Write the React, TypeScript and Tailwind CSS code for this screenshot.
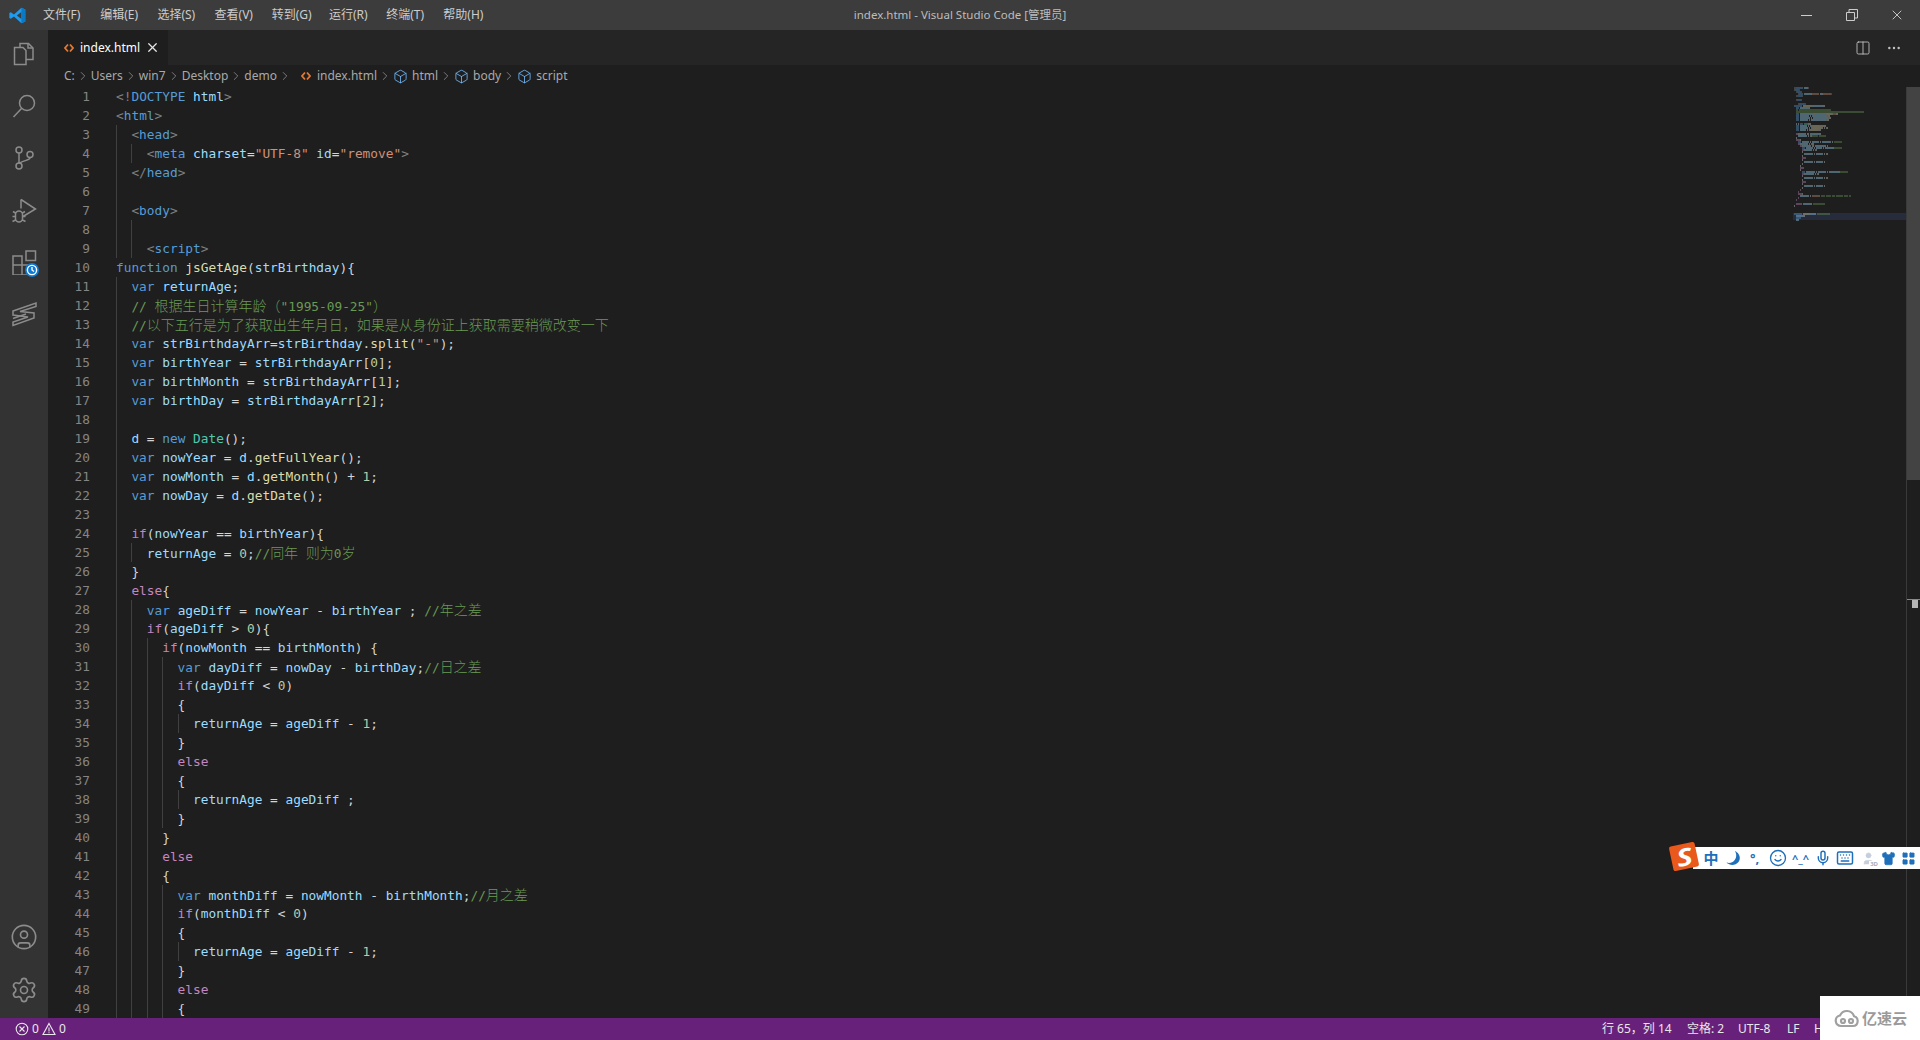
import React from "react";
import { X, Box, ChevronRight, Columns2, Ellipsis, CircleUser, Settings, Smile, Mic, Keyboard, Shirt, LayoutGrid, User } from "lucide-react";

const COLORS: Record<string, string> = {
  g: "text-[#808080]",
  b: "text-[#569cd6]",
  l: "text-[#9cdcfe]",
  s: "text-[#ce9178]",
  y: "text-[#dcdcaa]",
  c: "text-[#6a9955]",
  n: "text-[#b5cea8]",
  p: "text-[#c586c0]",
  t: "text-[#4ec9b0]",
  w: "text-[#d4d4d4]",
};
const FILL: Record<string, string> = {
  g: "#808080", b: "#569cd6", l: "#9cdcfe", s: "#ce9178", y: "#dcdcaa", c: "#6a9955", n: "#b5cea8", p: "#c586c0", t: "#4ec9b0", w: "#d4d4d4",
};

const LINES: string[] = [
  "0|g:<!|b:DOCTYPE |l:html|g:>",
  "0|g:<|b:html|g:>",
  "2|g:<|b:head|g:>",
  '4|g:<|b:meta |l:charset|w:=|s:"UTF-8" |l:id|w:=|s:"remove"|g:>',
  "2|g:</|b:head|g:>",
  "2",
  "2|g:<|b:body|g:>",
  "4",
  "4|g:<|b:script|g:>",
  "0|b:function |y:jsGetAge|w:(|l:strBirthday|w:){",
  "2|b:var |l:returnAge|w:;",
  '2|c:// 根据生日计算年龄（"1995-09-25"）',
  "2|c://以下五行是为了获取出生年月日，如果是从身份证上获取需要稍微改变一下",
  '2|b:var |l:strBirthdayArr|w:=|l:strBirthday|w:.|y:split|w:(|s:"-"|w:);',
  "2|b:var |l:birthYear |w:= |l:strBirthdayArr|w:[|n:0|w:];",
  "2|b:var |l:birthMonth |w:= |l:strBirthdayArr|w:[|n:1|w:];",
  "2|b:var |l:birthDay |w:= |l:strBirthdayArr|w:[|n:2|w:];",
  "2",
  "2|l:d |w:= |b:new |t:Date|w:();",
  "2|b:var |l:nowYear |w:= |l:d|w:.|y:getFullYear|w:();",
  "2|b:var |l:nowMonth |w:= |l:d|w:.|y:getMonth|w:() + |n:1|w:;",
  "2|b:var |l:nowDay |w:= |l:d|w:.|y:getDate|w:();",
  "2",
  "2|p:if|w:(|l:nowYear |w:== |l:birthYear|w:){",
  "4|l:returnAge |w:= |n:0|w:;|c://同年 则为0岁",
  "2|w:}",
  "2|p:else|w:{",
  "4|b:var |l:ageDiff |w:= |l:nowYear |w:- |l:birthYear |w:; |c://年之差",
  "4|p:if|w:(|l:ageDiff |w:> |n:0|w:){",
  "6|p:if|w:(|l:nowMonth |w:== |l:birthMonth|w:) {",
  "8|b:var |l:dayDiff |w:= |l:nowDay |w:- |l:birthDay|w:;|c://日之差",
  "8|p:if|w:(|l:dayDiff |w:< |n:0|w:)",
  "8|w:{",
  "10|l:returnAge |w:= |l:ageDiff |w:- |n:1|w:;",
  "8|w:}",
  "8|p:else",
  "8|w:{",
  "10|l:returnAge |w:= |l:ageDiff |w:;",
  "8|w:}",
  "6|w:}",
  "6|p:else",
  "6|w:{",
  "8|b:var |l:monthDiff |w:= |l:nowMonth |w:- |l:birthMonth|w:;|c://月之差",
  "8|p:if|w:(|l:monthDiff |w:< |n:0|w:)",
  "8|w:{",
  "10|l:returnAge |w:= |l:ageDiff |w:- |n:1|w:;",
  "8|w:}",
  "8|p:else",
  "8|w:{",
];

const MORE: string[] = [
  "10|l:returnAge |w:= |l:ageDiff |w:;",
  "8|w:}",
  "6|p:}",
  "4|p:}",
  "4|p:else|w:{",
  "6|l:returnAge |w:= |s:xxxxxxxx |c:xxxx xxxxx xxx xxxxxxx xxxx xx",
  "4|p:}",
  "2|p:}",
  "2",
  "2|p:return |l:returnAge|c: xxxxxxxxxxxx",
  "0|w:}",
  "0",
  "0",
  "0",
  "0|b:function |y:xxxxxx|w:(|l:xxxxxx |c:xxxxxxxxxxxxx",
  "2|l:xxxxxxxx|w:(",
  "2|b:xxxxx",
  "2|l:xxx",
];

type Tok = [string, string];
function parse(src: string): { indent: number; toks: Tok[] } {
  const parts = src.split("|");
  const indent = Number(parts[0]);
  const toks: Tok[] = parts.slice(1).map((p) => [p[0], p.slice(2)] as Tok);
  return { indent, toks };
}

const CJK = /([\u3000-\u9fff\uff00-\uffef]+)/;
function Comment({ text }: { text: string }) {
  return (
    <>
      {text.split(CJK).map((part, i) =>
        i % 2 === 1 ? (
          <span key={i} className="text-[14px] font-light font-['Noto_Sans_CJK_SC',sans-serif]">{part}</span>
        ) : (
          <span key={i}>{part}</span>
        )
      )}
    </>
  );
}

function CodeLine({ n, src }: { n: number; src: string }) {
  const { indent, toks } = parse(src);
  const guides = Array.from({ length: indent / 2 }, (_, i) => i);
  return (
    <div className="flex h-[19px] leading-[19px]">
      <div className="w-[42px] shrink-0 text-right text-[#858585]">{n}</div>
      <div className="relative ml-[26px] flex-1 whitespace-pre">
        {guides.map((g) => (
          <span key={g} className="absolute top-0 h-[19px] w-px bg-[#404040]" style={{ left: g * 15.4 }} />
        ))}
        <span style={{ paddingLeft: indent * 7.7 }} className="inline-block">
          {toks.map((t, i) => (
            <span key={i} className={COLORS[t[0]]}>
              {t[0] === "c" ? <Comment text={t[1]} /> : t[1]}
            </span>
          ))}
        </span>
      </div>
    </div>
  );
}

function Minimap() {
  const rects: React.ReactNode[] = [];
  [...LINES, ...MORE].forEach((src, row) => {
    const { indent, toks } = parse(src);
    let x = indent + 1;
    toks.forEach((t, ti) => {
      const re = /\S+/g;
      const wide = t[1].replace(/[\u3000-\u9fff\uff00-\uffef]/g, "xx");
      let m: RegExpExecArray | null;
      while ((m = re.exec(wide))) {
        rects.push(<rect key={`${row}-${ti}-${m.index}`} x={x + m.index} y={row * 2 + 0.3} width={m[0].length} height={1.4} fill={FILL[t[0]]} opacity={0.55} />);
      }
      x += wide.length;
    });
  });
  return (
    <div className="w-[113px] shrink-0">
      <svg width="113" height="144" viewBox="0 0 113 144">
        <rect x="0" y="126" width="113" height="7" fill="#262c3c" />
        {rects}
      </svg>
    </div>
  );
}

function HtmlIcon({ size = 10 }: { size?: number }) {
  return (
    <svg width={size} height={size} viewBox="0 0 10 10" fill="none" stroke="#e37933" strokeWidth="1.8">
      <path d="M4 1.5 1 5l3 3.5M6 1.5 9 5 6 8.5" />
    </svg>
  );
}

function ActivityBtn({ children }: { children: React.ReactNode }) {
  return <div className="relative flex h-[48px] w-[48px] items-center justify-center text-[#8c8c8c]">{children}</div>;
}

function ActivityBar() {
  const s = { fill: "none", stroke: "currentColor", strokeWidth: 1.5 };
  return (
    <div className="flex w-[48px] shrink-0 flex-col justify-between bg-[#333333] pb-[4px]">
      <div className="flex flex-col gap-[4px]">
        <ActivityBtn>
          <svg width="26" height="26" viewBox="0 0 26 26" {...s}>
            <path d="M9 6V2.5h8.5l4.5 4.5v11.5h-7" />
            <path d="M17 2.5V7h5" />
            <path d="M3.5 6.5H12l3 3v14H3.5z" />
          </svg>
        </ActivityBtn>
        <ActivityBtn>
          <svg width="26" height="26" viewBox="0 0 26 26" {...s}>
            <circle cx="16" cy="10" r="7.5" />
            <path d="M10.5 15.5 2.5 24" />
          </svg>
        </ActivityBtn>
        <ActivityBtn>
          <svg width="26" height="26" viewBox="0 0 26 26" {...s}>
            <circle cx="8" cy="5" r="3" />
            <circle cx="19" cy="9.5" r="3" />
            <circle cx="8" cy="21" r="3" />
            <path d="M8 8v10M19 12.5c0 3.5-8 2.5-10.5 6" />
          </svg>
        </ActivityBtn>
        <ActivityBtn>
          <svg width="26" height="26" viewBox="0 0 26 26" {...s}>
            <path d="M10 2.5 24.5 12 12 19.5" />
            <path d="M10 2.5v9" />
            <path d="M4.5 17.5a3.5 3.5 0 0 1 7 0v4a3.5 3.5 0 0 1-7 0zM4.5 19.5H1.5M11.5 19.5h3M4.5 23l-3 1.5M11.5 23l3 1.5M4.5 16 2 14.5M11.5 16l2.5-1.5" />
          </svg>
        </ActivityBtn>
        <ActivityBtn>
          <svg width="26" height="26" viewBox="0 0 26 26" {...s}>
            <path d="M2 7h9v19H2zM2 16h9M11 16h9v10h-9" />
            <path d="M15 2h9.5v9.5H15z" />
          </svg>
          <span className="absolute left-[25px] top-[25px] flex h-[14px] w-[14px] items-center justify-center rounded-full bg-[#0e7ad3]">
            <svg width="12" height="12" viewBox="0 0 12 12" fill="none" stroke="#ffffff" strokeWidth="1.4">
              <circle cx="6" cy="6" r="4.6" />
              <path d="M6 3v3l2 1.5" />
            </svg>
          </span>
        </ActivityBtn>
        <ActivityBtn>
          <svg width="26" height="26" viewBox="0 0 26 26" {...s}>
            <path d="M2 10 25 2v3.5L9 10.5l14 1.5v5L2 24.5v-3.5l15-5-15-2z" />
            <path d="M2 17.5 15 13" />
          </svg>
        </ActivityBtn>
      </div>
      <div className="flex flex-col gap-[5px]">
        <ActivityBtn>
          <CircleUser size={28} strokeWidth={1.4} />
        </ActivityBtn>
        <ActivityBtn>
          <Settings size={28} strokeWidth={1.4} />
        </ActivityBtn>
      </div>
    </div>
  );
}

const MENUS = ["文件(F)", "编辑(E)", "选择(S)", "查看(V)", "转到(G)", "运行(R)", "终端(T)", "帮助(H)"];

function TitleBar() {
  return (
    <div className="grid h-[30px] shrink-0 grid-cols-[1fr_auto_1fr] items-center bg-[#3c3c3c] text-[12px] text-[#cccccc]">
      <div className="flex items-center">
        <div className="flex w-[35px] justify-center">
          <svg width="17" height="17" viewBox="0 0 24 24">
            <path d="M17.5 1 23 3.6v16.8L17.5 23 7 13.3l-4.4 3.4L.5 15.6V8.4l2.1-1.1L7 10.7z" fill="#1f9cf0" />
            <path d="M17.5 7 11 12l6.5 5z" fill="#3c3c3c" />
            <path d="M17.5 1 23 3.6v16.8L17.5 23z" fill="#0b7ac4" />
          </svg>
        </div>
        {MENUS.map((m) => (
          <div key={m} className="w-[57.2px] shrink-0 whitespace-nowrap px-[8px]">{m}</div>
        ))}
      </div>
      <div className="text-[11.5px] text-[#bdbdbd]">index.html - Visual Studio Code [管理员]</div>
      <div className="flex h-full items-center justify-end">
        <div className="flex w-[45px] justify-center">
          <span className="h-px w-[11px] bg-[#cccccc]" />
        </div>
        <div className="flex w-[45px] justify-center">
          <svg width="12" height="12" viewBox="0 0 12 12" fill="none" stroke="#cccccc">
            <path d="M.5 3.5h8v8h-8zM3 3V.5h8.5V9H9" />
          </svg>
        </div>
        <div className="flex w-[46px] justify-center">
          <X size={16} strokeWidth={1.4} className="text-[#cccccc]" />
        </div>
      </div>
    </div>
  );
}

function TabBar() {
  return (
    <div className="flex h-[35px] shrink-0 items-stretch bg-[#252526]">
      <div className="flex w-[120px] items-center bg-[#1e1e1e] pl-[16px] text-[12px] text-white">
        <HtmlIcon />
        <span className="ml-[6px]">index.html</span>
        <X size={15} strokeWidth={2} className="ml-[5px] text-[#e6e6e6]" />
      </div>
      <div className="flex flex-1 items-center justify-end text-[#c5c5c5]">
        <Columns2 size={16} strokeWidth={1.3} />
        <Ellipsis size={16} strokeWidth={1.6} className="ml-[15px] mr-[18px]" />
      </div>
    </div>
  );
}

const Sep = () => <ChevronRight size={14} strokeWidth={1.2} className="mx-[1px] shrink-0 text-[#a0a0a0]" />;

function Crumbs() {
  return (
    <div className="flex h-[22px] shrink-0 items-center bg-[#1e1e1e] pl-[16px] text-[12px] text-[#a9a9a9]">
      <span>C:</span>
      <Sep />
      <span>Users</span>
      <Sep />
      <span>win7</span>
      <Sep />
      <span>Desktop</span>
      <Sep />
      <span>demo</span>
      <Sep />
      <span className="ml-[8px] mr-[6px]"><HtmlIcon /></span>
      <span>index.html</span>
      <Sep />
      <Box size={15} strokeWidth={1.3} className="mr-[4px] text-[#75beff]" />
      <span>html</span>
      <Sep />
      <Box size={15} strokeWidth={1.3} className="mr-[4px] text-[#75beff]" />
      <span>body</span>
      <Sep />
      <Box size={15} strokeWidth={1.3} className="mr-[4px] text-[#75beff]" />
      <span>script</span>
    </div>
  );
}

function Scrollbar() {
  return (
    <div className="relative w-[14px] shrink-0 border-l border-[#3a3a3a]">
      <div className="h-[393px] bg-[#434343]" />
      <div className="absolute left-0 right-0 top-[512px] h-px bg-[#8a8a8a]" />
      <div className="absolute left-[5px] top-[513px] h-[8px] w-[6px] bg-[#b4b4b4]" />
    </div>
  );
}

function Sogou() {
  return (
    <div className="absolute left-[1670px] top-[843px] flex h-[28px] w-[250px] items-center">
      <div className="absolute left-[23px] right-0 top-[4px] flex h-[22px] items-center bg-white pl-[8px] text-[#1f6fba]">
        <span className="w-[20px] text-center text-[15px] font-bold leading-none">中</span>
        <svg className="ml-[4px]" width="16" height="16" viewBox="0 0 16 16" fill="currentColor">
          <path d="M10 1c3.5 3.5 3.5 8-.5 11-2.500 1.800-5.500 1.800-8 .5 3.500 3.500 9 3 12-.5 2.500-3.500 1.500-8.500-3.500-11z" />
          <path d="M10 1c2.500 4.500 1 9-2.500 11-2 1.100-4 1.200-6 .5 3.500 2.500 8 2 10.500-1 2.500-3.500 1.500-8-2-10.500z" />
        </svg>
        <span className="ml-[9px] w-[14px] text-[13px] font-bold leading-none">°,</span>
        <Smile size={18} strokeWidth={1.8} className="ml-[5px]" />
        <span className="ml-[5px] w-[17px] text-center text-[11px] font-bold leading-none">^_^</span>
        <Mic size={16} strokeWidth={2.2} className="ml-[6px]" />
        <Keyboard size={18} strokeWidth={2} className="ml-[5px]" />
        <div className="relative ml-[7px] h-[15px] w-[15px]">
          <User size={15} fill="#c5cfdb" strokeWidth={1} className="text-[#c5cfdb]" />
          <span className="absolute bottom-[-2px] right-[-3px] bg-white px-px text-[6px] font-bold leading-[7px] text-[#9fb0c4]">3D</span>
        </div>
        <Shirt size={15} fill="currentColor" strokeWidth={1} className="ml-[5px]" />
        <LayoutGrid size={15} fill="currentColor" strokeWidth={1} className="ml-[5px]" />
      </div>
      <div className="absolute left-[1px] top-[1px] flex h-[25px] w-[26px] rotate-[-12deg] items-center justify-center rounded-[2px] bg-[#e9591c] text-[24px] font-bold italic leading-none text-white">
        <span className="scale-x-125">S</span>
      </div>
    </div>
  );
}

function Watermark() {
  return (
    <div className="absolute bottom-0 right-0 flex h-[44px] w-[100px] items-center bg-white pl-[14px]">
      <svg width="26" height="20" viewBox="0 0 26 20" fill="none" stroke="#a0a0a0" strokeWidth="2.2">
        <path d="M7 18h12a5 5 0 0 0 1-9.8A7.5 7.5 0 0 0 6 7.5 5.3 5.3 0 0 0 7 18z" />
        <circle cx="9" cy="13" r="2" />
        <circle cx="17" cy="13" r="2" />
      </svg>
      <span className="ml-[2px] text-[15px] font-bold text-[#9a9a9a]">亿速云</span>
    </div>
  );
}

function StatusBar() {
  return (
    <div className="flex h-[22px] shrink-0 items-center bg-[#68217a] pl-[15px] text-[12px] text-[#e8e8e8]">
      <svg width="14" height="14" viewBox="0 0 14 14" fill="none" stroke="currentColor" strokeWidth="1.1">
        <circle cx="7" cy="7" r="5.8" />
        <path d="m4.5 4.5 5 5m0-5-5 5" />
      </svg>
      <span className="ml-[3px]">0</span>
      <svg className="ml-[3px]" width="14" height="14" viewBox="0 0 14 14" fill="none" stroke="currentColor" strokeWidth="1.1">
        <path d="M7 1.5 13 12.5H1zM7 5.5v4M7 10.3v1" />
      </svg>
      <span className="ml-[3px]">0</span>
      <div className="ml-auto flex w-[318px] whitespace-nowrap">
        <span className="w-[85px]">行 65，列 14</span>
        <span className="w-[51px]">空格: 2</span>
        <span className="w-[49px]">UTF-8</span>
        <span className="w-[27px]">LF</span>
        <span>HTML</span>
      </div>
    </div>
  );
}

export default function App() {
  return (
    <div className="relative flex h-[1040px] w-[1920px] flex-col overflow-hidden bg-[#1e1e1e] font-['Noto_Sans','Noto_Sans_CJK_SC',sans-serif]">
      <TitleBar />
      <div className="flex min-h-0 flex-1">
        <ActivityBar />
        <div className="flex min-w-0 flex-1 flex-col">
          <TabBar />
          <Crumbs />
          <div className="flex min-h-0 flex-1">
            <div className="min-w-0 flex-1 overflow-hidden font-['DejaVu_Sans_Mono','Noto_Sans_CJK_SC',monospace] text-[12.8px]">
              {LINES.map((src, i) => (
                <CodeLine key={i} n={i + 1} src={src} />
              ))}
            </div>
            <Minimap />
            <Scrollbar />
          </div>
        </div>
      </div>
      <StatusBar />
      <Sogou />
      <Watermark />
    </div>
  );
}
